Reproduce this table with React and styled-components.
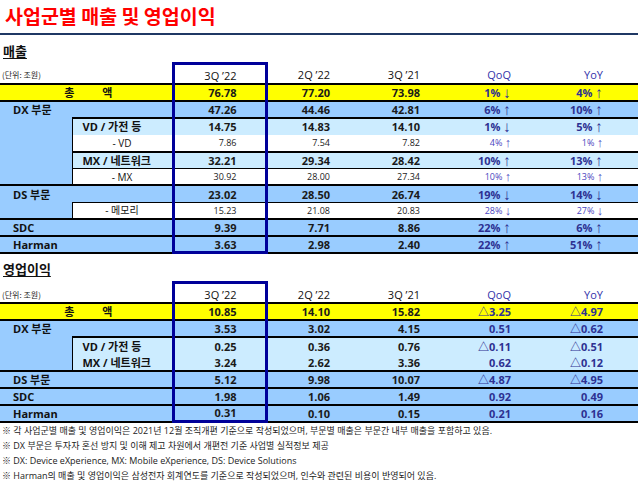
import React from 'react';
import styled, { createGlobalStyle, css } from 'styled-components';

const GlobalStyle = createGlobalStyle`
  html, body {
    margin: 0;
    padding: 0;
    background: #ffffff;
  }
  body {
    font-family: "Open Sans", "Noto Sans CJK KR", sans-serif;
    color: #111111;
  }
`;

const BG = {
  total: '#ffff00',
  group: '#99ccff',
  sub: '#ccecff',
  detail: '#ffffff',
};
const BOX = '#000099';
const RATE = '#2e3192';
const RATE_LIGHT = '#4a46c0';
const PAD = [28, 29, 32, 34, 35];

const Page = styled.div`
  width: 640px;
  height: 481px;
  overflow: hidden;
`;

const Title = styled.h1`
  margin: 0;
  height: 33px;
  padding-left: 5px;
  font: 700 19.5px/32px "Noto Sans CJK KR", sans-serif;
  color: #ff0000;
`;

const Rule = styled.div`
  width: 638px;
  height: 2px;
  background: #1f3864;
`;

const SectionTitle = styled.h2`
  margin: 0;
  box-sizing: border-box;
  height: ${p => p.$h}px;
  padding: ${p => p.$pt}px 0 0 3px;
  font: 700 13px/19px "Noto Sans CJK KR", sans-serif;
  color: #111111;
  text-decoration: underline;
  text-underline-offset: 2px;
  text-decoration-thickness: 1px;
`;

const Table = styled.table`
  width: 638px;
  border-collapse: collapse;
  table-layout: fixed;
`;

const Col = styled.col`
  width: ${p => p.$w}px;
`;

const Row = styled.tr`
  height: ${p => p.$h}px;
  background: ${p => p.$bg || 'transparent'};
`;

const Cell = styled.td`
  padding: 0;
  white-space: nowrap;
  vertical-align: middle;
  line-height: 1;
  border-top: ${p => (p.$top ? `${p.$top}px solid #000` : 'none')};
  border-bottom: ${p => (p.$bottom ? `${p.$bottom}px solid #000` : 'none')};
`;

const Filler = styled(Cell)`
  background: ${BG.group};
`;

const UnitCell = styled(Cell)`
  padding-left: 2px;
  padding-top: 3px;
  font: 400 8px "Noto Sans CJK KR", sans-serif;
  color: #222;
`;

const LabelCell = styled(Cell)`
  font-family: "Open Sans", "Noto Sans CJK KR", sans-serif;
  font-size: 11px;
  font-weight: 700;
  color: #111;
  ${p => p.$left && css`border-left: 1px solid #000;`}
  ${p => p.$kind === 'total' && css`text-align: center; padding-left: 5px;`}
  ${p => p.$kind === 'group' && css`padding-left: 13px;`}
  ${p => p.$kind === 'sub' && css`padding-left: 10px;`}
  ${p => p.$kind === 'detail' && css`
    text-align: center;
    font-size: 10px;
    font-weight: 400;
  `}
`;

const Spread = styled.span`
  display: inline-flex;
  gap: 28px;
`;

const NumCell = styled(Cell)`
  text-align: right;
  padding-right: ${p => PAD[p.$col]}px;
  font-family: "Open Sans", "Noto Sans CJK KR", sans-serif;
  font-size: ${p => (p.$kind === 'detail' ? 9 : 11)}px;
  font-weight: ${p => (p.$kind === 'detail' ? 400 : 700)};
  color: ${p => (p.$rate ? (p.$kind === 'detail' ? RATE_LIGHT : RATE) : '#1a1a1a')};
  ${p => p.$box && css`
    border-left: 3px solid ${BOX};
    border-right: 3px solid ${BOX};
  `}
  ${p => p.$boxBottom && css`border-bottom: 3px solid ${BOX};`}
`;

const HeadCell = styled(Cell)`
  text-align: right;
  padding-right: ${p => PAD[p.$col]}px;
  padding-top: 3px;
  font: 400 11px "Open Sans", sans-serif;
  color: ${p => (p.$rate ? '#3333aa' : '#111')};
  ${p => p.$box && css`
    border-left: 3px solid ${BOX};
    border-right: 3px solid ${BOX};
    border-top: 3px solid ${BOX};
  `}
`;

const Arrow = styled.span`
  font-family: "Liberation Sans", "DejaVu Sans", sans-serif;
  font-weight: 400;
  font-size: 1.4em;
  line-height: 0;
  vertical-align: -1px;
`;

const Notes = styled.div`
  padding-left: 2px;
  font: 400 9px/15px "Open Sans", "Noto Sans CJK KR", sans-serif;
  color: #222;
  white-space: nowrap;
`;

const HEADS = ['3Q ’22', '2Q ’22', '3Q ’21', 'QoQ', 'YoY'];

const SALES = [
  { kind: 'total', label: '총액', top: 2, v: ['76.78', '77.20', '73.98', '1% ↓', '4% ↑'] },
  { kind: 'group', label: 'DX 부문', top: 2, v: ['47.26', '44.46', '42.81', '6% ↑', '10% ↑'] },
  { kind: 'sub', label: 'VD / 가전 등', top: 2, v: ['14.75', '14.83', '14.10', '1% ↓', '5% ↑'] },
  { kind: 'detail', label: '- VD', top: 0, v: ['7.86', '7.54', '7.82', '4% ↑', '1% ↑'] },
  { kind: 'sub', label: 'MX / 네트워크', top: 2, v: ['32.21', '29.34', '28.42', '10% ↑', '13% ↑'] },
  { kind: 'detail', label: '- MX', top: 1, v: ['30.92', '28.00', '27.34', '10% ↑', '13% ↑'] },
  { kind: 'group', label: 'DS 부문', top: 2, v: ['23.02', '28.50', '26.74', '19% ↓', '14% ↓'] },
  { kind: 'detail', label: '- 메모리', top: 1, v: ['15.23', '21.08', '20.83', '28% ↓', '27% ↓'] },
  { kind: 'group', label: 'SDC', top: 2, v: ['9.39', '7.71', '8.86', '22% ↑', '6% ↑'] },
  { kind: 'group', label: 'Harman', top: 2, v: ['3.63', '2.98', '2.40', '22% ↑', '51% ↑'] },
];

const PROFIT = [
  { kind: 'total', label: '총액', top: 2, v: ['10.85', '14.10', '15.82', '△3.25', '△4.97'] },
  { kind: 'group', label: 'DX 부문', top: 2, v: ['3.53', '3.02', '4.15', '0.51', '△0.62'] },
  { kind: 'sub', label: 'VD / 가전 등', top: 2, v: ['0.25', '0.36', '0.76', '△0.11', '△0.51'] },
  { kind: 'sub', label: 'MX / 네트워크', top: 0, v: ['3.24', '2.62', '3.36', '0.62', '△0.12'] },
  { kind: 'group', label: 'DS 부문', top: 2, v: ['5.12', '9.98', '10.07', '△4.87', '△4.95'] },
  { kind: 'group', label: 'SDC', top: 2, v: ['1.98', '1.06', '1.49', '0.92', '0.49'] },
  { kind: 'group', label: 'Harman', top: 2, v: ['0.31', '0.10', '0.15', '0.21', '0.16'] },
];

const NOTES = [
  '※ 각 사업군별 매출 및 영업이익은 2021년 12월 조직개편 기준으로 작성되었으며, 부문별 매출은 부문간 내부 매출을 포함하고 있음.',
  '※ DX 부문은 투자자 혼선 방지 및 이해 제고 차원에서 개편전 기준 사업별 실적정보 제공',
  '※ DX: Device eXperience, MX: Mobile eXperience, DS: Device Solutions',
  '※ Harman의 매출 및 영업이익은 삼성전자 회계연도를 기준으로 작성되었으며, 인수와 관련된 비용이 반영되어 있음.',
];

function renderValue(val) {
  const m = val.match(/^(.*) ([↑↓])$/);
  if (!m) return val;
  return (
    <>
      {m[1]} <Arrow>{m[2]}</Arrow>
    </>
  );
}

function ResultTable({ rows }) {
  return (
    <Table>
      <colgroup>
        <Col $w={72} />
        <Col $w={101} />
        {HEADS.map(h => <Col key={h} $w={93} />)}
      </colgroup>
      <tbody>
        <Row $h={18}>
          <UnitCell colSpan={2}>(단위: 조원)</UnitCell>
          {HEADS.map((h, i) => (
            <HeadCell key={h} $col={i} $box={i === 0} $rate={i > 2}>{h}</HeadCell>
          ))}
        </Row>
        {rows.map((row, ri) => {
          const last = ri === rows.length - 1;
          const indent = row.kind === 'sub' || row.kind === 'detail';
          return (
            <Row key={row.label + ri} $h={16.9} $bg={BG[row.kind]}>
              {indent && <Filler />}
              <LabelCell
                colSpan={indent ? 1 : 2}
                $kind={row.kind}
                $left={indent}
                $top={row.top}
                $bottom={last ? 2 : 0}
              >
                {row.kind === 'total' ? (
                  <Spread><span>총</span><span>액</span></Spread>
                ) : row.label}
              </LabelCell>
              {row.v.map((val, i) => (
                <NumCell
                  key={i}
                  $col={i}
                  $kind={row.kind}
                  $rate={i > 2}
                  $top={row.top}
                  $bottom={last ? 2 : 0}
                  $box={i === 0}
                  $boxBottom={last && i === 0}
                >
                  {renderValue(val)}
                </NumCell>
              ))}
            </Row>
          );
        })}
      </tbody>
    </Table>
  );
}

export default function App() {
  return (
    <>
      <GlobalStyle />
      <Page>
        <Title>사업군별 매출 및 영업이익</Title>
        <Rule />
        <SectionTitle $h={27} $pt={6}>매출</SectionTitle>
        <ResultTable rows={SALES} />
        <SectionTitle $h={27} $pt={5}>영업이익</SectionTitle>
        <ResultTable rows={PROFIT} />
        <Notes>
          {NOTES.map(n => <div key={n}>{n}</div>)}
        </Notes>
      </Page>
    </>
  );
}
